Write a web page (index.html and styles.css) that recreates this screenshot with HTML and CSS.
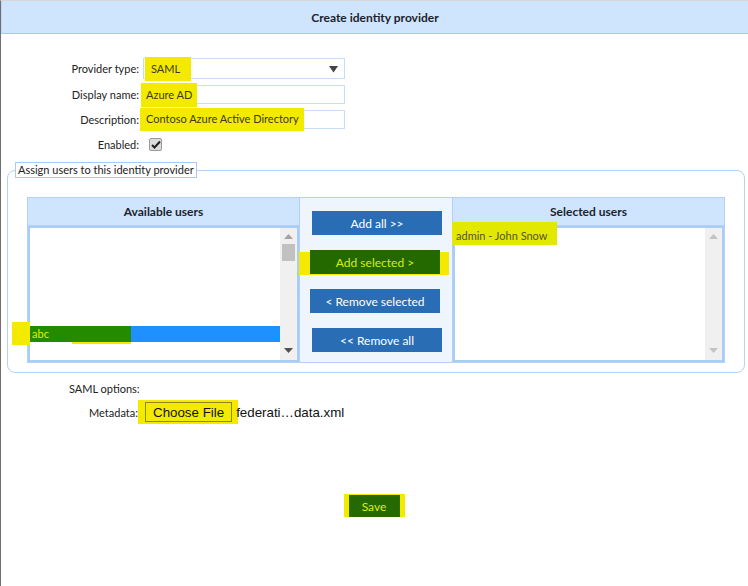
FILE: index.html
```html
<!DOCTYPE html>
<html>
<head>
<meta charset="utf-8">
<link rel="stylesheet" href="styles.css">
</head>
<body>
<div class="page">
  <div class="header">Create identity provider</div>

  <div class="form">
    <div class="row">
      <span class="lbl">Provider type:</span>
      <div class="select">
        <span class="hl hl-saml">SAML</span>
        <svg class="caret" width="9" height="8" viewBox="0 0 9 8"><path d="M0 1h9L4.5 7.5z" fill="#444"/></svg>
      </div>
    </div>
    <div class="row">
      <span class="lbl">Display name:</span>
      <div class="input"><span class="hl hl-name">Azure AD</span></div>
    </div>
    <div class="row">
      <span class="lbl">Description:</span>
      <div class="input"><span class="hl hl-desc">Contoso Azure Active Directory</span></div>
    </div>
    <div class="row row-check">
      <span class="lbl">Enabled:</span>
      <span class="check"><svg width="10" height="9" viewBox="0 0 10 9"><path d="M1 5l2.5 2.5L9 1.5" fill="none" stroke="#222" stroke-width="2"/></svg></span>
    </div>
  </div>

  <fieldset class="assign">
    <legend>Assign users to this identity provider</legend>
    <div class="picker">
      <div class="colhead">Available users</div>
      <div class="mid">
        <button class="btn btn-a">Add all &gt;&gt;</button>
        <button class="btn btn-green">Add selected &gt;</button>
        <button class="btn btn-b">&lt; Remove selected</button>
        <button class="btn btn-a">&lt;&lt; Remove all</button>
      </div>
      <div class="colhead">Selected users</div>

      <div class="listcell">
        <div class="list">
          <div class="item sel"><span class="abc">abc</span></div>
        </div>
        <div class="scroll">
          <svg class="arr" width="9" height="5" viewBox="0 0 9 5"><path d="M0 5h9L4.5 0z" fill="#a3a3a3"/></svg>
          <div class="thumb"></div>
          <div class="spacer"></div>
          <svg class="arr" width="9" height="5" viewBox="0 0 9 5"><path d="M0 0h9L4.5 5z" fill="#505050"/></svg>
        </div>
      </div>

      <div class="listcell">
        <div class="list list-top">
          <div class="item"><span class="admin">admin - John Snow</span></div>
        </div>
        <div class="scroll">
          <svg class="arr" width="9" height="5" viewBox="0 0 9 5"><path d="M0 5h9L4.5 0z" fill="#c3c3c3"/></svg>
          <div class="spacer"></div>
          <svg class="arr" width="9" height="5" viewBox="0 0 9 5"><path d="M0 0h9L4.5 5z" fill="#c3c3c3"/></svg>
        </div>
      </div>
    </div>
  </fieldset>

  <div class="saml">SAML options:</div>
  <div class="meta-row">
    <span class="lbl">Metadata:</span>
    <span class="file-hl"><button class="file-btn">Choose File</button></span>
    <span class="file-name">federati…data.xml</span>
  </div>

  <div class="save-wrap">
    <span class="save-hl"><button class="save">Save</button></span>
  </div>
</div>
</body>
</html>
```

FILE: styles.css
```css
* { box-sizing: border-box; }

body {
  margin: 0;
  font-family: Lato, "Open Sans", sans-serif;
  font-size: 11px;
  color: #222;
  background: #fff;
}

.page {
  width: 748px;
  height: 586px;
  border-left: 1px solid #6f6f6f;
  border-top: 1px solid #d6d6d6;
  overflow: hidden;
}

.header {
  height: 33px;
  background: #cfe4fd;
  border-bottom: 1px solid #a8c8f0;
  border-left: 1px solid #c0d6f2;
  display: flex;
  align-items: center;
  justify-content: center;
  font-weight: bold;
  font-size: 12px;
  color: #1c1f2e;
}

/* ---------- form ---------- */
.form {
  padding-top: 24px;
  display: flex;
  flex-direction: column;
  gap: 6px;
}

.row {
  display: flex;
  align-items: center;
  gap: 4px;
}

.lbl {
  width: 138px;
  text-align: right;
  color: #222;
}

.select, .input {
  width: 202px;
  border: 1px solid #c9dcf5;
  background: #fff;
  display: flex;
  align-items: center;
  position: relative;
}

.select { height: 21px; }
.input { height: 19px; }

.caret {
  position: absolute;
  right: 6px;
  top: 6px;
}

.hl {
  background: #f4ea00;
  color: #3c3c1a;
  position: relative;
  line-height: 16px;
}

.hl-saml { margin-left: 1px; padding: 4px 11px 4px 6px; }
.hl-name { margin-left: -3px; padding: 4px 5px 4px 5px; }
.hl-desc { margin-left: -4px; padding: 3px 5px 4px 6px; }

.row-check { height: 16px; margin-top: 1px; }

.check {
  width: 13px;
  height: 13px;
  margin-left: 6px;
  border: 1px solid #9a9a9a;
  border-radius: 2px;
  background: #dcdcdc;
  display: flex;
  align-items: center;
  justify-content: center;
}

/* ---------- fieldset ---------- */
.assign {
  margin: 10px 3px 0 6px;
  padding: 19px 19px 9px;
  border: 1px solid #b3d2f6;
  border-radius: 8px;
}

.assign legend {
  margin-left: -12px;
  padding: 0 2px;
  border: 1px solid #a9c9f2;
  line-height: 14px;
  color: #222;
}

.picker {
  display: grid;
  grid-template-columns: 271px 152px 271px;
  grid-template-rows: 27px 136px;
  gap: 1px;
  background: #b3d1f5;
  border: 1px solid #b3d1f5;
}

.colhead {
  background: #cfe4fd;
  font-weight: bold;
  font-size: 12px;
  color: #1c1f2e;
  display: flex;
  align-items: center;
  justify-content: center;
}

.colhead:nth-child(3) { grid-column: 3; grid-row: 1; }

.mid {
  grid-column: 2;
  grid-row: 1 / 3;
  background: #eef5fd;
  display: flex;
  flex-direction: column;
  align-items: center;
  padding-top: 13px;
  gap: 15px;
  position: relative;
  z-index: 0;
}

.btn {
  width: 130px;
  height: 24px;
  border: none;
  background: #296db5;
  color: #fff;
  font-family: inherit;
  font-size: 12px;
  padding: 0;
  flex: none;
}

.btn-a { margin-left: 2px; }
.btn-b { margin-left: -2px; }

.btn-green {
  background: #236900;
  color: #d8ec10;
  margin-left: -2px;
  position: relative;
}

.btn-green::before {
  content: "";
  position: absolute;
  left: -11px;
  top: 2px;
  width: 150px;
  height: 23px;
  background: #f4ea00;
  z-index: -1;
}

.listcell {
  background: #fff;
  border: 2px solid #a9cdf7;
  display: flex;
}

.list {
  flex: 1;
  display: flex;
  flex-direction: column;
  justify-content: flex-end;
  padding-bottom: 18px;
}

.list-top { justify-content: flex-start; padding: 0; }

.item {
  height: 16px;
  line-height: 16px;
  position: relative;
}

.item.sel { background: #1e90ff; }

.abc {
  display: inline-block;
  width: 101px;
  height: 16px;
  background: #248a00;
  color: #e0ef00;
  padding-left: 2px;
  position: relative;
}

.abc::before {
  content: "";
  position: absolute;
  left: -18px;
  top: -4px;
  width: 18px;
  height: 23px;
  background: #f4ea00;
}

.abc::after {
  content: "";
  position: absolute;
  left: 42px;
  top: 16px;
  width: 59px;
  height: 2px;
  background: #f4ea00;
}

.admin {
  position: absolute;
  left: -3px;
  top: -6px;
  height: 23px;
  width: 105px;
  padding: 6px 0 0 4px;
  background: #e3e800;
  color: #56561e;
  line-height: 16px;
}

.scroll {
  width: 17px;
  background: #f0f0f0;
  display: flex;
  flex-direction: column;
  align-items: center;
  padding: 6px 0 7px;
}

.arr { flex: none; }

.thumb {
  width: 13px;
  height: 17px;
  background: #c1c1c1;
  margin-top: 5px;
}

.spacer { flex: 1; }

/* ---------- SAML options ---------- */
.saml {
  margin-top: 8px;
  padding-left: 68px;
  line-height: 16px;
  color: #222;
}

.meta-row {
  margin-top: 3px;
  display: flex;
  align-items: center;
}

.meta-row .lbl { width: 137px; }

.file-hl {
  background: #f4ea00;
  padding: 2px 6px 2px 7px;
  display: flex;
}

.file-btn {
  height: 20px;
  padding: 0 7px;
  border: 1px solid #8a8a20;
  background: #f4ea00;
  font-family: "Liberation Sans", Arial, sans-serif;
  font-size: 13.33px;
  color: #111;
}

.file-name {
  margin-left: -2px;
  font-family: "Liberation Sans", Arial, sans-serif;
  font-size: 13.33px;
  color: #111;
}

.save-wrap {
  margin-top: 70px;
  display: flex;
  justify-content: center;
  padding-right: 1px;
}

.save-hl {
  background: #f4ea00;
  padding: 1px 5px 0;
  display: flex;
}

.save {
  width: 51px;
  height: 22px;
  border: none;
  background: #256900;
  color: #dfee10;
  font-family: inherit;
  font-size: 12px;
  padding: 0;
}
```
